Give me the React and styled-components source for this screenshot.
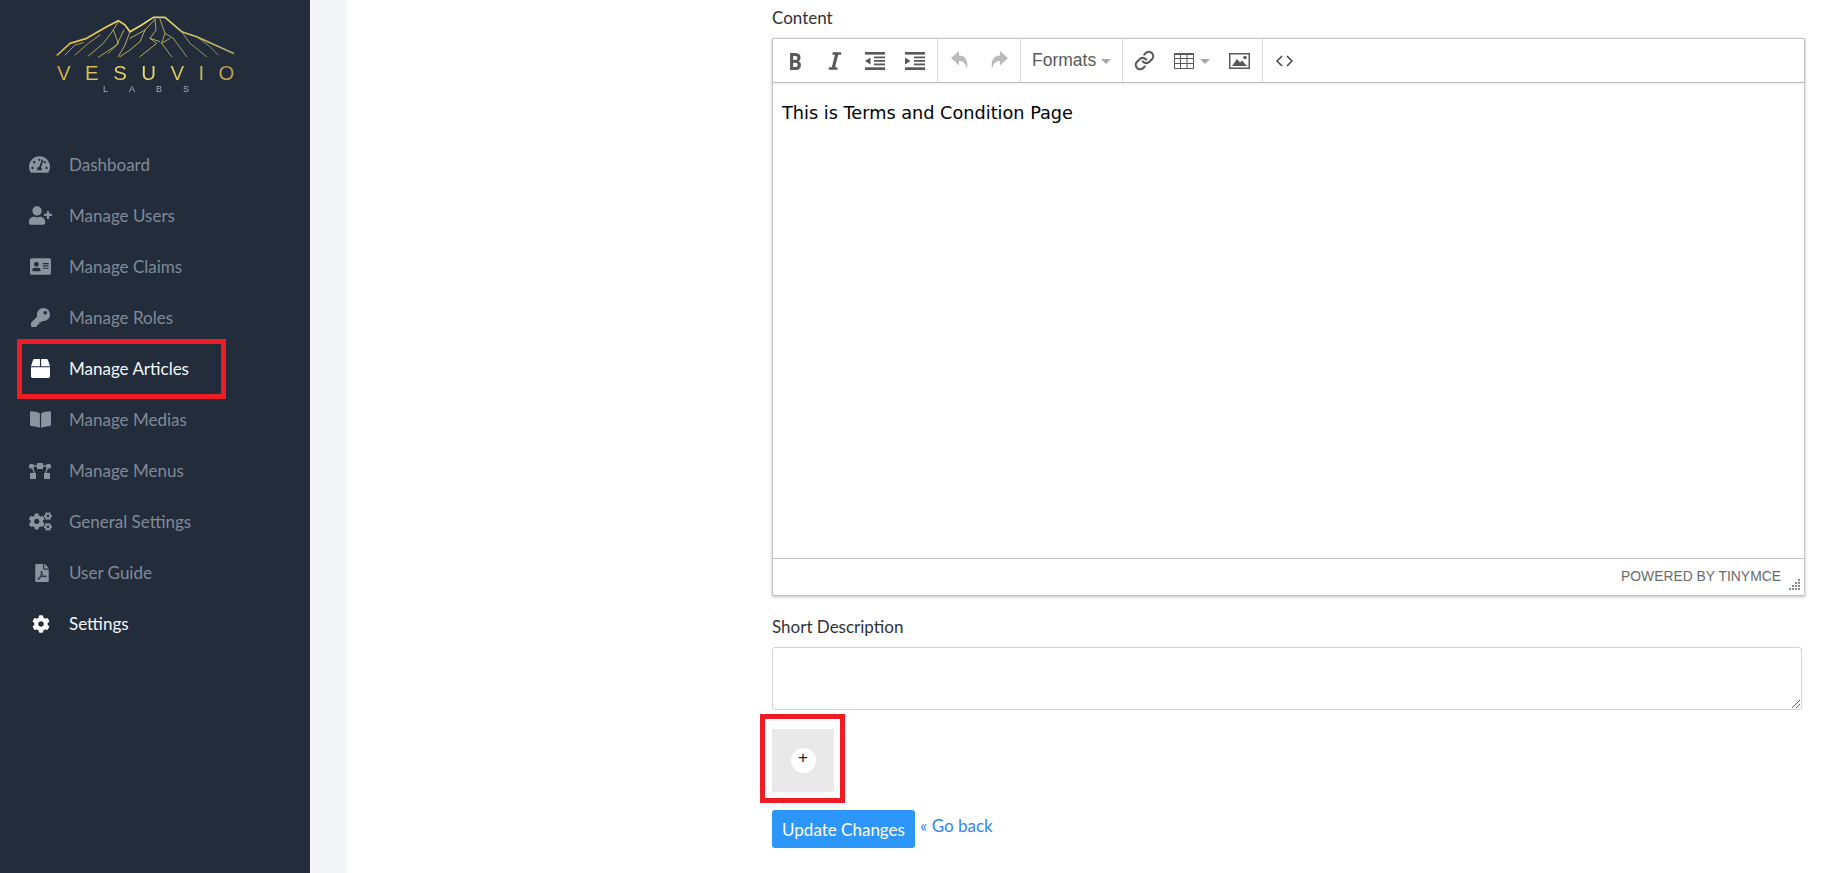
import React from "react";
import styled, { createGlobalStyle } from "styled-components";
import {
  FaTachometerAlt, FaUserPlus, FaAddressCard, FaKey, FaBox, FaBookOpen,
  FaCogs, FaFilePdf, FaCog, FaItalic,
} from "react-icons/fa";
import { Link as LinkIcon } from "lucide-react";

const Global = createGlobalStyle`
  html, body { margin: 0; padding: 0; height: 873px; overflow: hidden; background: #fff; }
  * { box-sizing: border-box; }
  body { font-family: "Lato", "Open Sans", sans-serif; font-size: 17px; color: #333; }
`;
const Shell = styled.div`display: flex; width: 1848px; height: 873px; overflow: hidden;`;
const Sidebar = styled.aside`width: 310px; flex: none; background: #222c3b; display: flex; flex-direction: column; padding-top: 10px;`;
const LogoWrap = styled.div`position: relative; width: 190px; height: 85px; margin-left: 50px; filter: blur(0.3px);`;
const LogoWord = styled.div`
  position: absolute; left: 7px; top: 53px; width: 210px;
  font: 400 20.5px/20px "Liberation Sans", sans-serif; letter-spacing: 14.4px; white-space: nowrap;
  background: linear-gradient(90deg, #cfae3f 0, #efdc78 85px, #b59445 185px); -webkit-background-clip: text; background-clip: text; color: transparent;
`;
const LogoSub = styled.div`
  position: absolute; left: 53px; top: 74px; font: 400 9px/10px "Liberation Sans", sans-serif; letter-spacing: 21px; color: #a9adb6; white-space: nowrap;
`;
const Nav = styled.nav`display: flex; flex-direction: column; margin-top: 44px;`;
const NavItem = styled.a`
  display: flex; align-items: center; height: 51px; padding-left: 29px;
  color: ${(p) => (p.$bright ? "#f4f6f8" : "#808a96")}; font-size: 17px; position: relative; white-space: nowrap;
`;
const NavIcon = styled.span`width: 40px; flex: none; display: flex; padding-left: ${(p) => p.$pad || 0}px; font-size: ${(p) => p.$size || 21}px; color: ${(p) => (p.$bright ? "#fff" : "#8b939e")};`;
const RedBox = styled.span`position: absolute; pointer-events: none; border: 5px solid #ee1c25; left: ${(p) => p.$l}px; top: ${(p) => p.$t}px; width: ${(p) => p.$w}px; height: ${(p) => p.$h}px;`;
const Gutter = styled.div`width: 37px; flex: none; background: #f4f5f8;`;
const Main = styled.main`flex: 1; background: #fff; padding: 8px 0 0 425px; display: flex; flex-direction: column; min-width: 0;`;
const FieldLabel = styled.label`display: block; font-size: 17px; line-height: 19px; color: #2f3237;`;
const Editor = styled.div`
  width: 1033px; height: 558px; margin-top: 11px; border: 1px solid #c5c5c5; box-shadow: 0 1px 3px rgba(0,0,0,.25);
  display: flex; flex-direction: column; background: #fff;
`;
const Toolbar = styled.div`display: flex; height: 44px; flex: none; border-bottom: 1px solid #bdbdbd; box-shadow: 0 1px 2px rgba(0,0,0,.08);`;
const ToolGroup = styled.div`display: flex; align-items: center; flex: none; width: ${(p) => p.$w}px; padding-left: ${(p) => p.$pad ?? 0}px; border-right: 1px solid #d9d9d9; &:last-child { border-right: 0; }`;
const ToolBtn = styled.span`display: flex; align-items: center; justify-content: center; gap: 6px; width: ${(p) => p.$w || 40}px; height: 42px; color: #595959; font-size: 20px;`;
const BoldGlyph = styled.span`font: 700 24px/24px "Open Sans", sans-serif; color: #595959; transform: scaleX(.85);`;
const Caret = styled.i`display: inline-block; flex: none; width: 0; height: 0; border-top: 5px solid #a8a8a8; border-left: 5px solid transparent; border-right: 5px solid transparent; margin-top: 2px;`;
const FormatsLabel = styled.span`display: flex; align-items: center; gap: 5px; font: 17.5px "Liberation Sans", sans-serif; color: #595959;`;
const EditBody = styled.div`flex: 1; padding: 19px 9px; font: 17.7px/22px "DejaVu Sans", sans-serif; color: #000;`;
const StatusBar = styled.div`height: 37px; flex: none; border-top: 1px solid #c5c5c5; display: flex; align-items: center; justify-content: flex-end; padding: 0 23px 2px 0; font: 13.9px "Liberation Sans", sans-serif; color: #6a6a6a; position: relative;`;
const Grip = styled.svg`position: absolute; right: 4px; bottom: 4px;`;
const ShortLabel = styled(FieldLabel)`margin-top: 21px;`;
const TextArea = styled.div`width: 1030px; height: 63px; margin-top: 11px; border: 1px solid #ced4da; border-radius: 3px; position: relative;`;
const Resizer = styled.svg`position: absolute; right: 1px; bottom: 1px;`;
const UploadRow = styled.div`position: relative; margin-top: 19px; height: 63px;`;
const UploadBox = styled.div`width: 62px; height: 63px; background: #e9e9e9; display: flex; align-items: center; justify-content: center;`;
const PlusDot = styled.div`width: 25px; height: 25px; border-radius: 50%; background: #fff; display: flex; align-items: center; justify-content: center; font: 17px/17px "Liberation Sans", sans-serif; color: #1a2230; padding-bottom: 7px;`;
const Actions = styled.div`display: flex; margin-top: 18px; align-items: flex-start;`;
const Submit = styled.button`height: 38px; width: 143px; background: #2d96fb; color: #fff; border: 0; border-radius: 3px; font: 17px "Lato", sans-serif; padding: 0;`;
const Back = styled.a`color: #2d86f5; font-size: 17px; line-height: 20px; margin-left: 5px; margin-top: 6px;`;
const LogoArt = styled.svg`display: block;`;

const Logo = () => (
  <LogoWrap>
    <LogoArt width="190" height="50" viewBox="0 0 570 150" fill="none">
      <defs>
        <linearGradient id="g" x1="0" x2="1" y1="0" y2="0">
          <stop offset="0" stopColor="#dcb83c" /><stop offset=".5" stopColor="#efdc72" /><stop offset="1" stopColor="#b0a468" />
        </linearGradient>
      </defs>
      <g stroke="url(#g)" strokeLinejoin="round" strokeLinecap="round">
        <path strokeWidth="5" d="M22 135L60 100L110 85L170 50L205 32L225 45L240 65L275 45L310 22L345 22L395 65L440 80L550 130" />
        <path strokeWidth="3" opacity=".75" d="M45 135L75 105L100 98M75 135L115 100L150 75M115 138L160 100L190 60L205 35M145 142L200 105L222 60M190 60L205 100L175 130M240 65L225 105L205 140M240 85L285 60L315 28M285 60L270 95L240 120L210 140M315 28L318 60L300 85L320 100L270 140M330 28L345 70L335 100L365 140M345 70L370 85L410 140M395 65L420 100L470 140M440 80L480 110L505 135M335 100L360 85M300 85L330 95" />
      </g>
    </LogoArt>
    <LogoWord>VESUVIO</LogoWord>
    <LogoSub>LABS</LogoSub>
  </LogoWrap>
);

const MenuTree = () => (
  <svg width="22" height="18" viewBox="0 0 22 18" fill="currentColor">
    <rect x="8" y="1" width="6" height="6" /><rect x="0" y="2" width="5" height="4.5" rx="1.5" /><rect x="17" y="2" width="5" height="4.5" rx="1.5" />
    <rect x="1" y="11" width="6" height="6" /><rect x="15" y="11" width="6" height="6" />
    <path d="M5 4h3M14 4h3M3.5 6L5.5 11M18.5 6L16.5 11" stroke="currentColor" strokeWidth="1.3" fill="none" />
  </svg>
);

const items = [
  ["Dashboard", FaTachometerAlt, 21, 0],
  ["Manage Users", FaUserPlus, 23, 0],
  ["Manage Claims", FaAddressCard, 21, 1],
  ["Manage Roles", FaKey, 19, 2],
  ["Manage Articles", FaBox, 19, 2, true],
  ["Manage Medias", FaBookOpen, 21, 1],
  ["Manage Menus", MenuTree, 22, 0],
  ["General Settings", FaCogs, 23, 0],
  ["User Guide", FaFilePdf, 18, 4],
  ["Settings", FaCog, 18, 3, true],
];

const Indent = ({ flip }) => (
  <svg width="20" height="18" viewBox="0 0 20 18" fill="#595959">
    <rect x="0" y="0" width="20" height="2.6" /><rect x="0" y="15.3" width="20" height="2.7" />
    <rect x="9" y="4.5" width="11" height="1.8" /><rect x="9" y="8" width="11" height="1.8" /><rect x="9" y="11.5" width="11" height="1.8" />
    <path d={flip ? "M0 5.5l5.5 3.5L0 12.5z" : "M5.5 5.5L0 9l5.5 3.5z"} />
  </svg>
);
const TableIcon = () => (
  <svg width="20" height="16" viewBox="0 0 20 16" fill="none" stroke="#5a5a5a" strokeWidth="1">
    <path d="M0 1h20" strokeWidth="2" /><rect x=".5" y=".5" width="19" height="15" /><path d="M6.5 0v16M13 0v16M0 5.5h20M0 10.5h20" />
  </svg>
);
const ImageIcon = () => (
  <svg width="21" height="16" viewBox="0 0 21 16">
    <rect x=".75" y=".75" width="19.5" height="14.5" fill="none" stroke="#595959" strokeWidth="1.5" />
    <path d="M3 13l5-7 3 3.5 2-2 5 5.5z" fill="#595959" /><circle cx="16" cy="4.5" r="1.8" fill="#595959" />
  </svg>
);
const CodeIcon = () => (
  <svg width="17" height="12" viewBox="0 0 17 12" fill="none" stroke="#444" strokeWidth="1.5"><path d="M6 1L1 6l5 5M11 1l5 5-5 5" /></svg>
);
const Curl = ({ flip }) => (
  <svg width="17" height="19" viewBox="0 0 17 19" fill="#bbb">
    <path transform={flip ? "matrix(-1 0 0 1 17 0)" : undefined} d="M0 7L8 0V4.5C14 4.5 17.5 9 16 18C14.5 12.5 12.5 10 8 10V14.5Z" />
  </svg>
);

export default function App() {
  return (
    <Shell>
      <Global />
      <Sidebar>
        <Logo />
        <Nav>
          {items.map(([label, Icon, size, pad, bright]) => (
            <NavItem key={label} $bright={bright}>
              <NavIcon $size={size} $pad={pad} $bright={bright}><Icon /></NavIcon>
              {label}
              {label === "Manage Articles" && <RedBox $l={17} $t={-4} $w={209} $h={60} />}
            </NavItem>
          ))}
        </Nav>
      </Sidebar>
      <Gutter />
      <Main>
        <FieldLabel>Content</FieldLabel>
        <Editor>
          <Toolbar>
            <ToolGroup $w={165} $pad={2}>
              <ToolBtn><BoldGlyph>B</BoldGlyph></ToolBtn>
              <ToolBtn><FaItalic /></ToolBtn>
              <ToolBtn><Indent /></ToolBtn>
              <ToolBtn><Indent flip /></ToolBtn>
            </ToolGroup>
            <ToolGroup $w={83} $pad={1}>
              <ToolBtn><Curl /></ToolBtn>
              <ToolBtn><Curl flip /></ToolBtn>
            </ToolGroup>
            <ToolGroup $w={102} $pad={11}><FormatsLabel>Formats <Caret /></FormatsLabel></ToolGroup>
            <ToolGroup $w={140} $pad={1}>
              <ToolBtn $w={40}><LinkIcon size={21} strokeWidth={2.4} /></ToolBtn>
              <ToolBtn $w={55}><TableIcon /><Caret /></ToolBtn>
              <ToolBtn $w={41}><ImageIcon /></ToolBtn>
            </ToolGroup>
            <ToolGroup $pad={1}><ToolBtn $w={40}><CodeIcon /></ToolBtn></ToolGroup>
          </Toolbar>
          <EditBody>This is Terms and Condition Page</EditBody>
          <StatusBar>
            POWERED BY TINYMCE
            <Grip width="12" height="12" viewBox="0 0 12 12" fill="#8a8a8a">
              <path d="M10 0h2v2h-2zM10 3h2v2h-2zM7 3h2v2H7zM10 6h2v2h-2zM7 6h2v2H7zM4 6h2v2H4zM10 9h2v2h-2zM7 9h2v2H7zM4 9h2v2H4zM1 9h2v2H1z" />
            </Grip>
          </StatusBar>
        </Editor>
        <ShortLabel>Short Description</ShortLabel>
        <TextArea>
          <Resizer width="9" height="9" viewBox="0 0 9 9" stroke="#666" fill="none"><path d="M1 9l8-8M5 9l4-4" /></Resizer>
        </TextArea>
        <UploadRow>
          <UploadBox><PlusDot>+</PlusDot></UploadBox>
          <RedBox $l={-12} $t={-15} $w={85} $h={89} />
        </UploadRow>
        <Actions>
          <Submit>Update Changes</Submit>
          <Back>« Go back</Back>
        </Actions>
      </Main>
    </Shell>
  );
}
